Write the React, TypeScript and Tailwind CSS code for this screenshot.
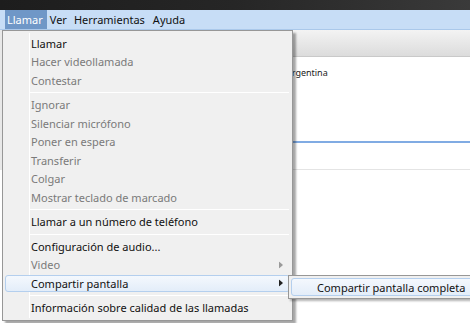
import React from "react";

type Item =
  | { kind: "item"; label: string; disabled?: boolean; arrow?: boolean; active?: boolean }
  | { kind: "sep" };

const items: Item[] = [
  { kind: "item", label: "Llamar" },
  { kind: "item", label: "Hacer videollamada", disabled: true },
  { kind: "item", label: "Contestar", disabled: true },
  { kind: "sep" },
  { kind: "item", label: "Ignorar", disabled: true },
  { kind: "item", label: "Silenciar micrófono", disabled: true },
  { kind: "item", label: "Poner en espera", disabled: true },
  { kind: "item", label: "Transferir", disabled: true },
  { kind: "item", label: "Colgar", disabled: true },
  { kind: "item", label: "Mostrar teclado de marcado", disabled: true },
  { kind: "sep" },
  { kind: "item", label: "Llamar a un número de teléfono" },
  { kind: "sep" },
  { kind: "item", label: "Configuración de audio..." },
  { kind: "item", label: "Video", disabled: true, arrow: true },
  { kind: "item", label: "Compartir pantalla", arrow: true, active: true },
  { kind: "sep" },
  { kind: "item", label: "Información sobre calidad de las llamadas" },
];

function Arrow({ color }: { color: string }) {
  return (
    <svg width="4" height="7" viewBox="0 0 4 7" className="absolute right-[7px] top-1/2 -translate-y-1/2">
      <path d="M0 0 L4 3.5 L0 7 Z" fill={color} />
    </svg>
  );
}

function MenuRow({ item }: { item: Item }) {
  if (item.kind === "sep") {
    return (
      <div className="flex h-[6px] items-center pl-[25px] pr-[1px]">
        <div className="h-px w-full border-b border-white bg-[#e0e0e0]" />
      </div>
    );
  }
  return (
    <div
      className={
        "relative flex h-[18.5px] items-center whitespace-nowrap pl-[26px] " +
        (item.disabled ? "text-[#7a7a7a]" : "text-[#111]")
      }
    >
      {item.active && (
        <div className="absolute inset-y-[0.5px] left-0 right-0 rounded-[3px] border border-[#b4cfee] bg-gradient-to-b from-[#f4f8fd] to-[#e3edf9]" />
      )}
      <span className="relative">{item.label}</span>
      {item.arrow && <Arrow color={item.disabled ? "#9a9a9a" : "#222"} />}
    </div>
  );
}

export default function App() {
  return (
    <div
      className="relative h-[323px] w-[470px] overflow-hidden bg-white text-[11px] leading-none"
      style={{ fontFamily: '"Noto Sans", "Segoe UI", sans-serif' }}
    >
      {/* window title strip */}
      <div className="h-[10px] bg-gradient-to-r from-[#1d1d1d] via-[#262626] to-[#3a3a3a]" />

      {/* menubar */}
      <div className="flex h-[20px] items-stretch border-b border-[#aac8ea] bg-[#c7ddf6] pl-[5px] text-[#111]">
        <div className="flex items-center bg-[#6f97c7] pl-[2px] pr-[4px] text-white">Llamar</div>
        <div className="flex items-center px-[3px]">Ver</div>
        <div className="flex items-center px-[4px]">Herramientas</div>
        <div className="flex items-center px-[4px]">Ayuda</div>
      </div>

      {/* app content behind the menu */}
      <div className="flex">
        <div className="w-[3px] bg-[#e8e8e8]" />
        <div className="flex-1">
          <div className="h-[27px] border-b border-[#c9c9c9] bg-gradient-to-b from-[#f3f3f3] to-[#dcdcdc]" />
          <div className="h-[84px] pl-[283px] pt-[11px] text-[9px] text-[#222]">Argentina</div>
          <div className="h-[2px] bg-[#80abe3]" />
          <div className="h-[27px] border-b border-[#e4e4e4]" />
        </div>
      </div>

      {/* dropdown menu */}
      <div className="absolute left-[2px] top-[30px] w-[291px] border border-[#979797] bg-[#f0f0f0] px-[2px] py-[3px] shadow-[3px_3px_2px_rgba(0,0,0,0.35)]">
        <div className="absolute bottom-[2px] left-[26px] top-[2px] w-px border-r border-white bg-[#e2e2e2]" />
        {items.map((it, i) => (
          <MenuRow key={i} item={it} />
        ))}
      </div>

      {/* submenu */}
      <div className="absolute left-[288px] top-[275px] w-[190px] border border-[#979797] bg-[#f0f0f0] p-[2px] shadow-[2px_2px_2px_rgba(0,0,0,0.3)]">
        <div className="flex h-[18px] items-center whitespace-nowrap rounded-[3px] border border-[#b4cfee] bg-gradient-to-b from-[#f4f8fd] to-[#e3edf9] pl-[25px] text-[#111]">
          Compartir pantalla completa
        </div>
      </div>
    </div>
  );
}
